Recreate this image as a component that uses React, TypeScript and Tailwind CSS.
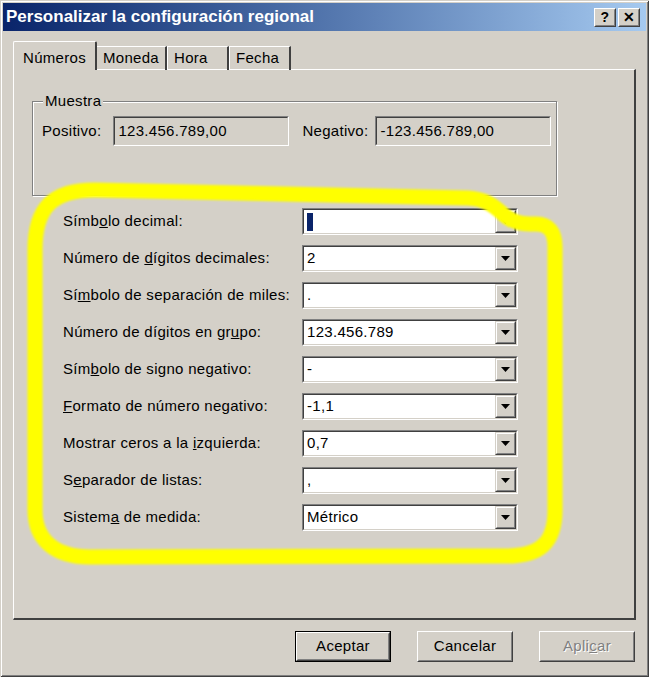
import React from "react";

const rows: { label: React.ReactNode; value: React.ReactNode }[] = [
  { label: <>Símb<u>o</u>lo decimal:</>, value: <span className="inline-block h-[18px] w-[6px] bg-[#0a246a] align-middle" /> },
  { label: <>Número de <u>d</u>ígitos decimales:</>, value: "2" },
  { label: <>Sí<u>m</u>bolo de separación de miles:</>, value: "." },
  { label: <>Número de dígitos en gr<u>u</u>po:</>, value: "123.456.789" },
  { label: <>Sím<u>b</u>olo de signo negativo:</>, value: "-" },
  { label: <><u>F</u>ormato de número negativo:</>, value: "-1,1" },
  { label: <>Mostrar ceros a la <u>i</u>zquierda:</>, value: "0,7" },
  { label: <>S<u>e</u>parador de listas:</>, value: "," },
  { label: <>Sistem<u>a</u> de medida:</>, value: "Métrico" },
];

function Combo({ value }: { value: React.ReactNode }) {
  return (
    <div className="w-[216px] h-[27px] border border-t-[#808080] border-l-[#808080] border-b-white border-r-white">
      <div className="h-full flex border border-t-[#404040] border-l-[#404040] border-b-[#d4d0c8] border-r-[#d4d0c8] bg-white">
        <div className="flex-1 pl-[3px] flex items-center">{value}</div>
        <div className="w-[21px] h-full border border-t-[#d4d0c8] border-l-[#d4d0c8] border-b-[#404040] border-r-[#404040]">
          <div className="h-full flex items-center justify-center bg-[#d4d0c8] border border-t-white border-l-white border-b-[#808080] border-r-[#808080]">
            <svg width="9" height="5" viewBox="0 0 9 5">
              <path d="M0 0h9L4.5 5z" fill="#000" />
            </svg>
          </div>
        </div>
      </div>
    </div>
  );
}

function ReadOnly({ value }: { value: string }) {
  return (
    <div className="w-[176px] h-[30px] border border-t-[#808080] border-l-[#808080] border-b-white border-r-white">
      <div className="h-full flex items-center pl-[3px] border border-t-[#404040] border-l-[#404040] border-b-[#d4d0c8] border-r-[#d4d0c8]">
        {value}
      </div>
    </div>
  );
}

function Button({ children, main, disabled }: { children: React.ReactNode; main?: boolean; disabled?: boolean }) {
  return (
    <div className={"w-[96px] h-[31px] " + (main ? "border border-black" : "")}>
      <div className="h-full border border-t-white border-l-white border-b-[#404040] border-r-[#404040]">
        <div className="h-full flex items-center justify-center border border-t-[#d4d0c8] border-l-[#d4d0c8] border-b-[#808080] border-r-[#808080]">
          <span className={disabled ? "text-[#808080] [text-shadow:1px_1px_0_#fff]" : ""}>{children}</span>
        </div>
      </div>
    </div>
  );
}

export default function App() {
  return (
    <div className="relative w-[649px] h-[677px] bg-[#d4d0c8] p-[3px] font-['Liberation_Sans',Arial,sans-serif] text-[15px] tracking-[0.3px] text-black shadow-[inset_1px_1px_0_#d4d0c8,inset_-1px_-1px_0_#404040,inset_2px_2px_0_#fff,inset_-2px_-2px_0_#808080]">
      {/* title bar */}
      <div className="h-[28px] flex items-center justify-between pl-[3px] pr-[6px] bg-gradient-to-r from-[#0a246a] to-[#a6caf0]">
        <span className="text-white font-bold text-[17px] tracking-normal">Personalizar la configuración regional</span>
        <div className="flex gap-[2px]">
          {["?", "✕"].map((c) => (
            <div key={c} className="w-[22px] h-[19px] border border-t-white border-l-white border-b-[#404040] border-r-[#404040]">
              <div className="h-full flex items-center justify-center bg-[#d4d0c8] border border-t-[#d4d0c8] border-l-[#d4d0c8] border-b-[#808080] border-r-[#808080] font-bold text-[14px] leading-none">
                {c}
              </div>
            </div>
          ))}
        </div>
      </div>

      <div className="px-[10px] pt-[10px]">
        {/* tabs */}
        <div className="flex items-end h-[29px] relative z-10 -mb-px">
          <div className="h-[29px] w-[84px] flex items-start justify-center pt-[5px] bg-[#d4d0c8] border-l border-t border-white border-r-2 border-r-[#404040] rounded-t-[2px]">
            Números
          </div>
          {["Moneda", "Hora", "Fecha"].map((t, i) => (
            <div
              key={t}
              className={
                "h-[24px] flex items-center pl-[6px] border-t border-white border-r-2 border-r-[#404040] " +
                (i === 0 ? "w-[70px]" : "w-[62px] border-l")
              }
            >
              {t}
            </div>
          ))}
        </div>

        {/* panel */}
        <div className="h-[551px] border-l border-t border-white border-r-2 border-b-2 border-r-[#404040] border-b-[#404040] pl-[18px] pt-[31px]">
          <div className="relative w-[525px] h-[95px] border border-[#808080] shadow-[1px_1px_0_#fff,inset_1px_1px_0_#fff] pl-[9px] pt-[14px] flex items-start">
            <span className="absolute -top-[9px] left-[10px] px-[2px] bg-[#d4d0c8] leading-[16px]">Muestra</span>
            <div className="flex items-center gap-[12px]">
              <span>Positivo:</span>
              <ReadOnly value="123.456.789,00" />
            </div>
            <div className="flex items-center gap-[7px] ml-[13px]">
              <span>Negativo:</span>
              <ReadOnly value="-123.456.789,00" />
            </div>
          </div>

          <div className="mt-[12px] pl-[31px] flex flex-col gap-[10px]">
            {rows.map((r, i) => (
              <div key={i} className="flex items-center">
                <span className="w-[239px]">{r.label}</span>
                <Combo value={r.value} />
              </div>
            ))}
          </div>
        </div>

        {/* buttons */}
        <div className="flex justify-end gap-[26px] mt-[11px] pr-[1px]">
          <Button main>Aceptar</Button>
          <Button>Cancelar</Button>
          <Button disabled>
            Apli<u>c</u>ar
          </Button>
        </div>
      </div>

      {/* yellow highlight drawn over the dialog */}
      <svg className="absolute inset-0 pointer-events-none" width="649" height="677" viewBox="0 0 649 677">
        <defs>
          <filter id="soft" x="-5%" y="-5%" width="110%" height="110%">
            <feGaussianBlur stdDeviation="1.2" />
          </filter>
        </defs>
        <path
          d="M 35 250 C 35 208 52 190 95 190 L 468 198 C 488 199 496 208 504 215 C 511 221 518 224 530 224 L 536 224 C 549 224 555 232 555 247 L 555 510 C 555 543 540 556 506 556 L 90 557 C 55 557 35 540 35 510 Z"
          fill="none"
          stroke="#ffff00"
          strokeWidth="15"
          strokeLinejoin="round"
          filter="url(#soft)"
        />
      </svg>
    </div>
  );
}
